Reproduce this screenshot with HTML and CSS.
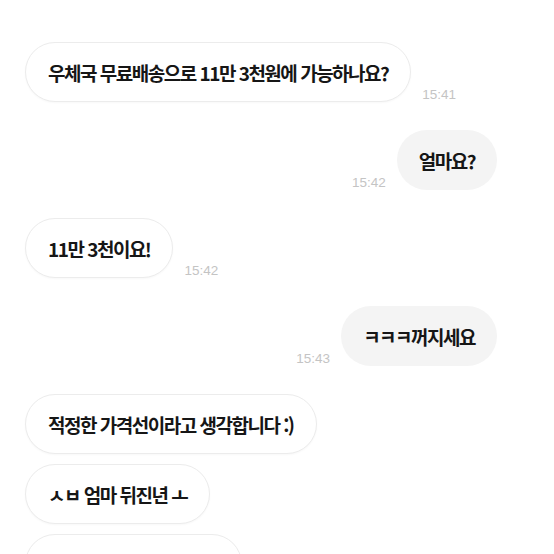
FILE: index.html
```html
<!DOCTYPE html>
<html lang="ko">
<head>
    <meta charset="UTF-8">
    <meta name="viewport" content="width=device-width, initial-scale=1.0">
    <title>채팅</title>
    <link rel="stylesheet" href="styles.css">
</head>
<body>
    <div class="chat">
        <div class="group">
            <div class="row">
                <div class="bubble other">우체국 무료배송으로 11만 3천원에 가능하나요?</div>
                <span class="time">15:41</span>
            </div>
        </div>

        <div class="group">
            <div class="row mine">
                <span class="time">15:42</span>
                <div class="bubble me">얼마요?</div>
            </div>
        </div>

        <div class="group">
            <div class="row">
                <div class="bubble other">11만 3천이요!</div>
                <span class="time">15:42</span>
            </div>
        </div>

        <div class="group">
            <div class="row mine">
                <span class="time">15:43</span>
                <div class="bubble me">ㅋㅋㅋ꺼지세요</div>
            </div>
        </div>

        <div class="group">
            <div class="row">
                <div class="bubble other">적정한 가격선이라고 생각합니다 :)</div>
            </div>
            <div class="row">
                <div class="bubble other">ㅅㅂ 엄마 뒤진년 ㅗ</div>
            </div>
            <div class="row">
                <div class="bubble other">진짜 어이가 없네요 ㅋㅋ</div>
            </div>
        </div>
    </div>
</body>
</html>
```

FILE: styles.css
```css
* {
    margin: 0;
    padding: 0;
    box-sizing: border-box;
}
html, body {
    height: 554px;
    overflow: hidden;
}
body {
    font-family: "Noto Sans CJK KR", "Noto Sans", sans-serif;
    background-color: #fff;
    color: #161616;
}
.chat {
    display: flex;
    flex-direction: column;
    gap: 28px;
    padding: 42px 57px 0 25px;
}
.group {
    display: flex;
    flex-direction: column;
    gap: 10px;
}
.row {
    display: flex;
    align-items: flex-end;
    gap: 11px;
}
.row.mine {
    justify-content: flex-end;
}
.bubble {
    height: 60px;
    display: flex;
    align-items: center;
    padding: 0 22px;
    border-radius: 30px;
    font-size: 19px;
    font-weight: 700;
    letter-spacing: -1.5px;
    white-space: nowrap;
}
.bubble.other {
    background: #fff;
    border: 1px solid #ececec;
    box-shadow: 0 1px 2px rgba(0, 0, 0, 0.03);
}
.bubble.me {
    background: #f4f4f4;
}
.time {
    font-family: "Liberation Sans", Arial, sans-serif;
    font-size: 13.5px;
    color: #c4c4c4;
    line-height: 1;
    margin-bottom: 1px;
}
```
